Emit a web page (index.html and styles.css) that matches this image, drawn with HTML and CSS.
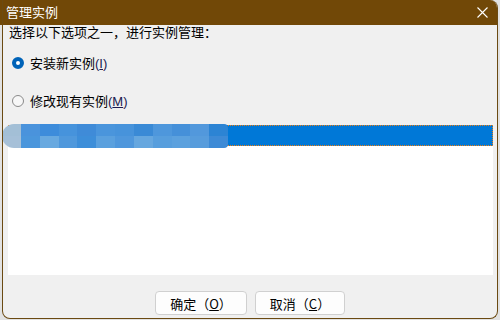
FILE: index.html
```html
<!DOCTYPE html>
<html lang="zh-CN">
<head>
  <meta charset="UTF-8" />
  <title>管理实例</title>
  <link rel="stylesheet" href="styles.css">
</head>
<body>

  <div class="window">
    <div class="titlebar">
      <span class="title">管理实例</span>
      <svg class="close" width="11" height="11" viewBox="0 0 11 11">
        <path d="M0.5 0.5 L10.5 10.5 M10.5 0.5 L0.5 10.5" stroke="#fff" stroke-width="1.1" fill="none" />
      </svg>
    </div>

    <div class="content">
      <div class="prompt">选择以下选项之一，进行实例管理：</div>

      <label class="option first">
        <span class="radio checked"></span>
        <span>安装新实例<span class="latin">(<u>I</u>)</span></span>
      </label>

      <label class="option second">
        <span class="radio"></span>
        <span>修改现有实例<span class="latin">(<u>M</u>)</span></span>
      </label>

      <div class="listbox">
        <div class="row selected"></div>
        <div class="mosaic">
          <span style="background:#a3bfd6"></span><span style="background:#4a93dc"></span><span style="background:#3d8cdb"></span><span style="background:#4693dc"></span><span style="background:#3f8bd8"></span><span style="background:#4a95dc"></span><span style="background:#4793db"></span><span style="background:#3a8ad6"></span><span style="background:#4e97dc"></span><span style="background:#4590d9"></span><span style="background:#5298dc"></span><span style="background:#2c84d4"></span>
          <span style="background:#a6c0d8"></span><span style="background:#4a96dc"></span><span style="background:#68a9e0"></span><span style="background:#4f98dc"></span><span style="background:#3d8ed9"></span><span style="background:#5aa0de"></span><span style="background:#4f97dc"></span><span style="background:#66a7df"></span><span style="background:#579edd"></span><span style="background:#5ca1de"></span><span style="background:#579cdc"></span><span style="background:#3d8ad6"></span>
        </div>
      </div>

      <div class="buttons">
        <button class="btn ok">确定（<u>O</u>）</button>
        <button class="btn">取消（<u>C</u>）</button>
      </div>
    </div>
  </div>

</body>
</html>
```

FILE: styles.css
```css
body {
  margin: 0;
  width: 500px;
  height: 320px;
  overflow: hidden;
  font-family: "Noto Sans CJK SC", "Liberation Sans", sans-serif;
  font-size: 13px;
  color: #000;
  background: linear-gradient(#714807, #714807) 0 0 / 2px 25px no-repeat, #e2e2e2;
}

.window {
  margin-left: 2px;
  width: 496px;
  height: 319px;
  box-sizing: border-box;
  border: 1px solid #6b4a12;
  border-top: none;
  border-radius: 0 8px 8px 8px;
  background: #f0f0f0;
  overflow: hidden;
  display: flex;
  flex-direction: column;
}

.titlebar {
  height: 25px;
  box-sizing: border-box;
  flex: none;
  background: #714807;
  color: #fff;
  display: flex;
  align-items: center;
  justify-content: space-between;
  padding: 0 9px 1px 3px;
}

.title {
  font-size: 13px;
  line-height: 16px;
}

.close {
  margin-top: 1px;
}

.content {
  flex: 1;
  display: flex;
  flex-direction: column;
  padding: 0 4px 0 5px;
}

.prompt {
  line-height: 14px;
  height: 14px;
  padding-left: 1px;
}

.option {
  display: flex;
  align-items: center;
  gap: 6px;
  padding-left: 4px;
  height: 16px;
  line-height: 16px;
}

.option.first {
  margin-top: 16px;
}

.option.second {
  margin-top: 22px;
}

.latin {
  font-family: "Liberation Sans", sans-serif;
  font-size: 13px;
  color: #1a1a50;
}

.radio {
  width: 12px;
  height: 12px;
  box-sizing: border-box;
  border-radius: 50%;
  border: 1px solid #8a8a8a;
  background: #f7f7f7;
  flex: none;
}

.radio.checked {
  border: 4px solid #0063b8;
  background: #fff;
}

.listbox {
  position: relative;
  margin-top: 16px;
  height: 150px;
  background: #fff;
}

.row.selected {
  height: 21px;
  box-sizing: border-box;
  background: #0078d7;
  border: 1px dotted #f07f10;
}

.mosaic {
  position: absolute;
  left: -6px;
  top: -1px;
  width: 226px;
  height: 24px;
  display: grid;
  grid-template-columns: repeat(12, 1fr);
  grid-template-rows: 1fr 1fr;
  border-radius: 12px 4px 4px 12px;
  overflow: hidden;
  filter: blur(0.4px);
}

.buttons {
  display: flex;
  justify-content: center;
  gap: 8px;
  margin-top: 16px;
  padding-right: 1px;
}

.btn {
  height: 24px;
  width: 90px;
  padding: 0;
  font-family: "Noto Sans CJK SC", "Liberation Sans", sans-serif;
  font-size: 13px;
  color: #000;
  background: #fdfdfd;
  border: 1px solid #d0d0d0;
  border-radius: 4px;
}

.btn.ok {
  width: 92px;
}
```
